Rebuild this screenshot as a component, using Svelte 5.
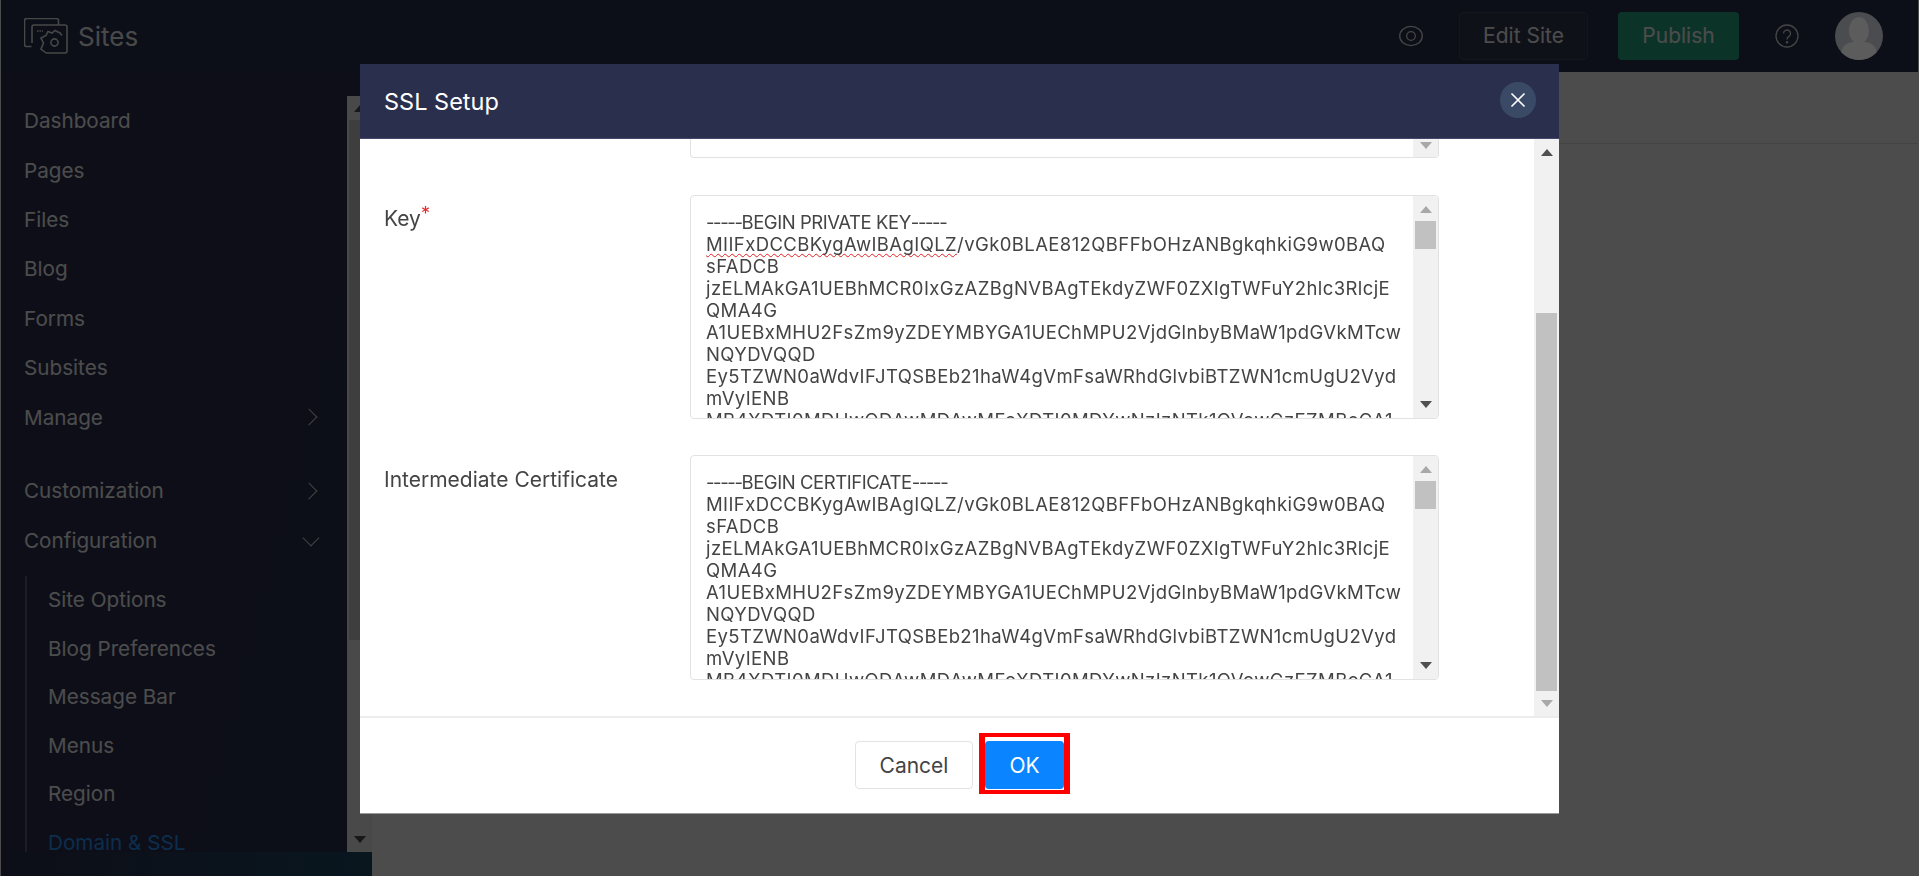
<script>
  const nav = [
    { label: 'Dashboard' },
    { label: 'Pages' },
    { label: 'Files' },
    { label: 'Blog' },
    { label: 'Forms' },
    { label: 'Subsites' },
    { label: 'Manage', arrow: 'right' }
  ];
  const subNav = ['Site Options', 'Blog Preferences', 'Message Bar', 'Menus', 'Region', 'Domain & SSL'];

  const certRest = `sFADCB
jzELMAkGA1UEBhMCR0IxGzAZBgNVBAgTEkdyZWF0ZXIgTWFuY2hlc3RlcjE
QMA4G
A1UEBxMHU2FsZm9yZDEYMBYGA1UEChMPU2VjdGlnbyBMaW1pdGVkMTcw
NQYDVQQD
Ey5TZWN0aWdvIFJTQSBEb21haW4gVmFsaWRhdGlvbiBTZWN1cmUgU2Vyd
mVyIENB
MB4XDTI0MDUwODAwMDAwMFoXDTI0MDYwNzIzNTk1OVowGzEZMBcGA1`;
</script>

<div class="page">
  <header class="topbar">
    <div class="brand">
      <svg class="logo" width="44" height="37" viewBox="0 0 44 37" fill="none" stroke="currentColor" stroke-width="1.6">
        <path d="M7.500 28.500H2.500a2 2 0 0 1-2-2V2.500a2 2 0 0 1 2-2h30a2 2 0 0 1 2 2v4.500" />
        <path d="M8 25V9a2 2 0 0 1 2-2h31a2 2 0 0 1 2 2v24a2 2 0 0 1-2 2H22" />
        <path d="M22 35l-5-4 2.500-6-2.500-5 5-2.500 2-4 4 1.500 3-2.500 5 2.500 2 2.500" />
        <path d="M13 13h6" stroke-dasharray="1.500 1" />
        <circle cx="30.500" cy="24.500" r="3.600" />
      </svg>
      <span>Sites</span>
    </div>
    <div class="actions">
      <svg class="eye" width="24" height="24" viewBox="0 0 24 24" fill="none" stroke="currentColor" stroke-width="1.3">
        <ellipse cx="12" cy="12" rx="11.300" ry="9.700" />
        <circle cx="12" cy="12" r="4.300" />
      </svg>
      <button class="edit">Edit Site</button>
      <button class="publish">Publish</button>
      <svg class="help" width="24" height="24" viewBox="0 0 24 24" fill="none" stroke="currentColor" stroke-width="1.3">
        <circle cx="12" cy="12" r="11" />
        <path d="M8.500 9.500a3.500 3.500 0 1 1 5.500 2.900c-1.300.9-2 1.500-2 3" />
        <circle cx="12" cy="18.300" r=".6" />
      </svg>
      <div class="avatar">
        <span class="head"></span>
        <span class="shoulders"></span>
      </div>
    </div>
  </header>

  <div class="main">
    <aside class="sidebar">
      <nav class="nav">
        {#each nav as item}
          <div class="nav-item">
            {item.label}
            {#if item.arrow}<i class="chev"></i>{/if}
          </div>
        {/each}
        <div class="nav-item group">Customization <i class="chev"></i></div>
        <div class="nav-item">Configuration <i class="chev down"></i></div>
        <div class="sub">
          {#each subNav as s, i}
            <div class="sub-item" class:active={i === subNav.length - 1}>{s}</div>
          {/each}
        </div>
      </nav>
      <div class="side-scroll">
        <span class="arr up side-up"></span>
        <div class="side-thumb"></div>
        <span class="arr dn side-dn"></span>
      </div>
    </aside>
    <section class="content">
      <div class="content-head"></div>
    </section>
  </div>
  <div class="side-foot"></div>
</div>

<div class="overlay"></div>

<div class="modal">
  <div class="modal-head">
    <h2>SSL Setup</h2>
    <button class="close" aria-label="Close">
      <svg width="14" height="14" viewBox="0 0 14 14" stroke="#fff" stroke-width="1.7" stroke-linecap="round"><path d="M1 1l12 12M13 1L1 13" /></svg>
    </button>
  </div>
  <div class="modal-body">
    <div class="form">
      <div class="stub">
        <div class="bar"><span class="arr dn dim"></span></div>
      </div>
      <div class="row key">
        <label>Key<em>*</em></label>
        <div class="ta">
          <div class="ta-text"><div class="pem"><span class="dash">-----</span>BEGIN PRIVATE KEY<span class="dash">-----</span></div><div><span class="spell">MIIFxDCCBKygAwIBAgIQLZ</span>/vGk0BLAE812QBFFbOHzANBgkqhkiG9w0BAQ</div><div>{certRest}</div></div>
          <div class="bar">
            <span class="arr up dim"></span>
            <span class="thumb"></span>
            <span class="arr dn"></span>
          </div>
        </div>
      </div>
      <div class="row cert">
        <label>Intermediate Certificate</label>
        <div class="ta">
          <div class="ta-text"><div class="pem"><span class="dash">-----</span>BEGIN CERTIFICATE<span class="dash">-----</span></div><div>MIIFxDCCBKygAwIBAgIQLZ/vGk0BLAE812QBFFbOHzANBgkqhkiG9w0BAQ</div><div>{certRest}</div></div>
          <div class="bar">
            <span class="arr up dim"></span>
            <span class="thumb"></span>
            <span class="arr dn"></span>
          </div>
        </div>
      </div>
    </div>
    <div class="body-scroll">
      <span class="arr up"></span>
      <span class="body-thumb"></span>
      <span class="arr dn dim"></span>
    </div>
  </div>
  <div class="modal-foot">
    <button class="cancel">Cancel</button>
    <div class="ok-wrap">
      <button class="ok">OK</button>
    </div>
  </div>
</div>

<style>
  :global(body) {
    margin: 0;
    overflow: hidden;
    font-family: Inter, "Liberation Sans", sans-serif;
  }
  button { font: inherit; cursor: pointer; }

  .page {
    width: 1919px;
    height: 876px;
    box-sizing: border-box;
    border-left: 1px solid #fff;
    border-right: 1px solid #fff;
    display: flex;
    flex-direction: column;
    background: #fff;
    position: relative;
    overflow: hidden;
  }
  .topbar {
    height: 72px;
    flex: none;
    background: #2b3250;
    color: #fff;
    display: flex;
    align-items: center;
    justify-content: space-between;
    padding: 0 35px 0 23px;
  }
  .brand { display: flex; align-items: center; gap: 10px; font-size: 26px; color: #f4f4f4; }
  .logo { color: #eee; margin-top: 1px; }
  .actions { display: flex; align-items: center; height: 48px; }
  .eye { margin-right: 36px; color: #e8e8e8; }
  .edit {
    width: 129px; height: 48px;
    background: #353a52;
    border: 1px solid #444a63;
    border-radius: 4px;
    color: #fff;
    font-size: 21px;
    margin-right: 30px;
    padding-bottom: 3px;
  }
  .publish {
    width: 121px; height: 48px;
    background: #2bac87;
    border: 0;
    border-radius: 4px;
    color: #fff;
    font-size: 21px;
    margin-right: 36px;
    padding-bottom: 3px;
  }
  .help { margin-right: 36px; color: #e8e8e8; }
  .avatar {
    width: 48px; height: 48px;
    border-radius: 50%;
    background: #4a4c50;
    position: relative;
    z-index: 1;
    overflow: hidden;
  }
  .head {
    position: absolute; left: 14px; top: 5px;
    width: 20px; height: 27px;
    border-radius: 50%;
    background: #5c5c5c;
  }
  .shoulders {
    position: absolute; left: 6px; top: 30px;
    width: 36px; height: 24px;
    border-radius: 12px 12px 0 0;
    background: #5c5c5c;
  }

  .main { flex: 1; min-height: 0; display: flex; }
  .sidebar {
    width: 371px;
    flex: none;
    display: flex;
    background: linear-gradient(105deg, #2c3150 65%, #2b3552 100%);
    color: #fff;
  }
  .nav { flex: 1; min-width: 0; height: 780px; padding-top: 24px; box-sizing: border-box; overflow: hidden; }
  .nav-item {
    height: 49.4px;
    padding: 0 26px 0 23px;
    font-size: 20.7px;
    display: flex;
    align-items: center;
    justify-content: space-between;
  }
  .nav-item.group { margin-top: 24.5px; }
  .chev {
    width: 11px; height: 11px;
    border-top: 1px solid #ddd;
    border-right: 1px solid #ddd;
    transform: rotate(45deg);
    margin-right: 6px;
  }
  .chev.down { transform: rotate(135deg); margin-right: 4px; margin-top: -4px; }
  .sub { margin: 11px 0 0 24px; border-left: 2px solid #58617f; padding-left: 21px; }
  .sub-item { height: 48.6px; line-height: 48.6px; font-size: 20.7px; }
  .sub-item.active { color: #2a9cff; }

  .side-scroll {
    width: 25px;
    flex: none;
    margin-top: 24px;
    height: 756px;
    background: #f4f4f4;
    position: relative;
  }
  .side-thumb { position: absolute; left: 2px; right: 2px; top: 24px; height: 520px; background: #d0d0d0; }
  .side-up { position: absolute; left: 7px; top: 9px; }
  .side-dn { position: absolute; left: 7px; bottom: 9px; }
  .content { flex: 1; background: #fff; }
  .content-head { height: 71px; border-bottom: 1px solid #e5e5e5; }
  .side-foot {
    position: absolute; left: 0; bottom: 0;
    width: 371px; height: 24px;
    background: linear-gradient(90deg, #2c3150, #1f4b66);
  }

  .overlay { position: fixed; inset: 0; background: rgba(0, 0, 0, .7); }

  .modal {
    position: fixed;
    left: 360px;
    top: 64px;
    width: 1199px;
    height: 749px;
    background: #fff;
    display: flex;
    flex-direction: column;
    color: #444;
    box-shadow: 0 1px 0 #999;
  }
  .modal-head {
    height: 75px;
    flex: none;
    background: #2b2f4e;
    border-bottom: 1px solid #45486a;
    display: flex;
    align-items: center;
    justify-content: space-between;
    padding: 0 24px;
    box-sizing: border-box;
  }
  .modal-head h2 { margin: 0; font-size: 23.5px; font-weight: 400; color: #fff; }
  .close {
    width: 36px; height: 36px;
    border-radius: 50%;
    border: 0;
    background: #3a4a66;
    padding: 0;
    display: flex; align-items: center; justify-content: center;
    margin-top: -3px;
    margin-right: -1px;
  }

  .modal-body { flex: 1; min-height: 0; display: flex; overflow: hidden; }
  .form { flex: 1; min-width: 0; padding-left: 24px; }
  .stub {
    height: 19px;
    margin-left: 306px;
    width: 749px;
    border: 1px solid #e2e2e2;
    border-top: 0;
    border-radius: 0 0 4px 4px;
    box-sizing: border-box;
    display: flex;
    justify-content: flex-end;
  }
  .bar {
    width: 25px;
    flex: none;
    background: #f1f1f1;
    position: relative;
    display: flex;
    flex-direction: column;
    align-items: center;
  }
  .stub .bar .arr { position: absolute; top: 3px; }
  .row { display: flex; }
  .row.key { margin-top: 37px; }
  .row.cert { margin-top: 36px; }
  label { width: 306px; flex: none; font-size: 21px; color: #444; padding-top: 8px; box-sizing: border-box; }
  .row.cert label { padding-top: 12px; }
  label em { color: #e5252a; font-style: normal; vertical-align: 6px; font-size: 18px; }
  .ta {
    width: 749px;
    height: 224px;
    border: 1px solid #e2e2e2;
    border-radius: 4px;
    box-sizing: border-box;
    display: flex;
    overflow: hidden;
  }
  .row.cert .ta { height: 225px; }
  .ta-text {
    flex: 1;
    min-width: 0;
    padding: 15px 0 0 15px;
    font-size: 18.5px;
    line-height: 22px;
    letter-spacing: .4px;
    color: #444;
    white-space: pre;
    overflow: hidden;
  }
  .pem { letter-spacing: -.45px; }
  .dash { letter-spacing: -1.4px; }
  .spell {
    text-decoration: underline wavy #e02020 1px;
    text-underline-offset: 2px;
    text-decoration-skip-ink: none;
  }
  .arr { display: block; width: 0; height: 0; border-left: 6px solid transparent; border-right: 6px solid transparent; }
  .arr.up { border-bottom: 7px solid #505050; }
  .arr.dn { border-top: 7px solid #505050; }
  .arr.dim.up { border-bottom-color: #a8a8a8; }
  .arr.dim.dn { border-top-color: #a8a8a8; }
  .bar .arr.up { position: absolute; top: 10px; }
  .bar .arr.dn { position: absolute; bottom: 10px; }
  .thumb { position: absolute; top: 25px; left: 2px; right: 2px; height: 28px; background: #c1c1c1; }

  .body-scroll {
    width: 25px;
    flex: none;
    background: #f1f1f1;
    position: relative;
    display: flex;
    justify-content: center;
  }
  .body-scroll .arr { position: absolute; }
  .body-scroll .arr.up { top: 10px; }
  .body-scroll .arr.dn { bottom: 9px; }
  .body-thumb { position: absolute; left: 2px; right: 2px; top: 174px; height: 378px; background: #c1c1c1; }

  .modal-foot {
    height: 97px;
    flex: none;
    border-top: 2px solid #ececec;
    box-sizing: border-box;
    display: flex;
    align-items: flex-start;
    justify-content: center;
    padding-top: 23px;
    gap: 12px;
  }
  .cancel {
    width: 118px; height: 48px;
    background: #fff;
    border: 1px solid #e3e3e3;
    border-radius: 4px;
    color: #444;
    font-size: 21px;
  }
  .ok-wrap { position: relative; height: 48px; }
  .ok {
    width: 79px; height: 48px;
    background: #0a84ff;
    border: 0;
    border-radius: 4px;
    color: #fff;
    font-size: 21px;
  }
  .ok-wrap::after {
    content: '';
    position: absolute;
    left: -6px; top: -8px; right: -6px; bottom: -5px;
    border-style: solid;
    border-color: #f00;
    border-width: 4px 6px;
  }
</style>
